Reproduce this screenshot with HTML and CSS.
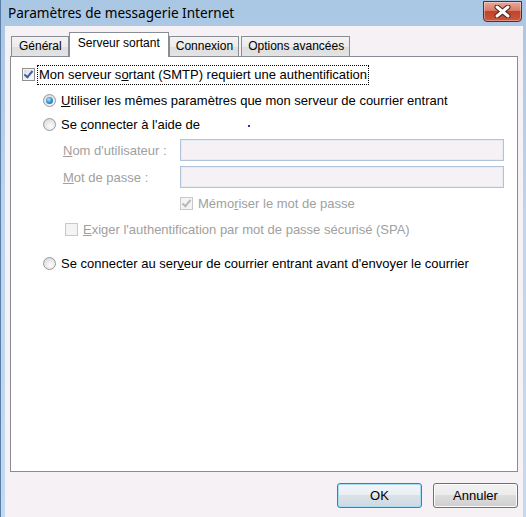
FILE: index.html
```html
<!DOCTYPE html>
<html lang="fr">
<head>
  <meta charset="UTF-8">
  <title>Paramètres de messagerie Internet</title>
  <link rel="stylesheet" href="styles.css">
</head>
<body>
  <div class="window">
    <div class="titlebar">
      <span class="title">Paramètres de messagerie Internet</span>
      <div class="close">
        <svg width="17" height="13" viewBox="0 0 17 13">
          <path d="M3 2 L14 11 M14 2 L3 11" stroke="#4a1f1a" stroke-width="5" stroke-linecap="round"/>
          <path d="M3 2 L14 11 M14 2 L3 11" stroke="#ffffff" stroke-width="3" stroke-linecap="round"/>
        </svg>
      </div>
    </div>

    <div class="client">
      <div class="tabs">
        <div class="tab">Général</div>
        <div class="tab active">Serveur sortant</div>
        <div class="tab">Connexion</div>
        <div class="tab">Options avancées</div>
      </div>

      <div class="panel">
        <div class="row row-auth">
          <span class="check checked"></span>
          <span class="focus">Mon serveur s<u>o</u>rtant (SMTP) requiert une authentification</span>
        </div>
        <div class="row row-same">
          <span class="radio selected"></span>
          <span><u>U</u>tiliser les mêmes paramètres que mon serveur de courrier entrant</span>
        </div>
        <div class="row row-login">
          <span class="radio"></span>
          <span>Se <u>c</u>onnecter à l'aide de</span>
          <span class="dot"></span>
        </div>
        <div class="field row-user">
          <label class="disabled"><u>N</u>om d'utilisateur :</label>
          <input type="text" disabled>
        </div>
        <div class="field row-pass">
          <label class="disabled"><u>M</u>ot de passe :</label>
          <input type="password" disabled>
        </div>
        <div class="row row-remember disabled">
          <span class="check checked off"></span>
          <span>Mémo<u>r</u>iser le mot de passe</span>
        </div>
        <div class="row row-spa disabled">
          <span class="check off"></span>
          <span><u>E</u>xiger l'authentification par mot de passe sécurisé (SPA)</span>
        </div>
        <div class="row row-before">
          <span class="radio"></span>
          <span>Se connecter au ser<u>v</u>eur de courrier entrant avant d'envoyer le courrier</span>
        </div>
      </div>

      <div class="buttons">
        <button class="btn default">OK</button>
        <button class="btn">Annuler</button>
      </div>
    </div>
  </div>
</body>
</html>
```

FILE: styles.css
```css
body {
  margin: 0;
  width: 526px;
  height: 517px;
  overflow: hidden;
  font-family: 'Liberation Sans', Arial, sans-serif;
  font-size: 13px;
  color: #000;
}
.window {
  height: 517px;
  display: flex;
  flex-direction: column;
  background: linear-gradient(180deg, #a9c6e3 0%, #bcd4ee 40%, #c3d9f0 100%);
  border-left: 1px solid #5b7ea6;
}

/* Title bar */
.titlebar {
  height: 26px;
  display: flex;
  justify-content: space-between;
  align-items: flex-start;
}
.title {
  font-family: 'Noto Sans', sans-serif;
  font-size: 13.6px;
  color: #000;
  margin: 4px 0 0 7px;
  line-height: 18px;
}
.close {
  width: 37px;
  height: 19px;
  margin: 1px 4px 0 0;
  border: 1px solid #5c2b2b;
  border-radius: 0 0 4px 4px;
  background: linear-gradient(180deg, #e9a99b 0%, #d97a65 45%, #c2432b 50%, #c9583f 100%);
  display: flex;
  align-items: center;
  justify-content: center;
  box-shadow: inset 0 0 0 1px rgba(255,255,255,0.35);
}

/* Client area */
.client {
  flex: 1;
  margin: 0 3px 0 4px;
  background: #f5f1f5;
  padding: 7px 5px 0 5px;
  display: flex;
  flex-direction: column;
}

/* Tabs */
.tabs {
  display: flex;
  align-items: flex-end;
  height: 23px;
  padding-left: 1px;
  position: relative;
  z-index: 1;
  font-size: 12px;
}
.tab {
  height: 19px;
  line-height: 19px;
  padding: 0 5px 0 6px;
  border: 1px solid #898c95;
  border-bottom: none;
  background: linear-gradient(180deg, #f3f3f3 0%, #ebebeb 50%, #dedede 51%, #e3e3e3 100%);
  margin-right: 2px;
}
.tab:first-child { margin-right: 0; padding: 0 6px 0 7px; }
.tab.active {
  height: 24px;
  line-height: 20px;
  margin-bottom: -1px;
  background: #fff;
  padding: 0 8px;
  margin-right: 0;
}

/* Panel */
.panel {
  height: 406px;
  border: 1px solid #898c95;
  background: #fff;
  padding: 8px 0 0 11px;
  display: flex;
  flex-direction: column;
}
.row {
  display: flex;
  align-items: center;
  gap: 5px;
}
.row-auth { height: 19px; }
.row-same, .row-login, .row-before { height: 18px; padding-left: 21px; }
.row-same { margin-top: 7px; }
.row-login { margin-top: 6px; }
.row-before { margin-top: 17px; }
.row-remember { height: 16px; margin-top: 7px; padding-left: 158px; }
.row-spa { height: 16px; margin-top: 10px; padding-left: 43px; }
.disabled { color: #a0a0a0; }

.focus {
  outline: 1px dotted #000;
  padding: 1px 1px 2px 1px;
  margin-left: -2px;
}
.dot {
  width: 2px;
  height: 2px;
  background: #2a2ad0;
  margin-left: 43px;
  margin-top: 4px;
}

.field {
  display: flex;
  align-items: center;
  height: 22px;
  padding-left: 41px;
}
.row-user { margin-top: 6px; }
.row-pass { margin-top: 5px; }
.field label { width: 117px; }
.field input {
  width: 324px;
  height: 22px;
  box-sizing: border-box;
  border: 1px solid #b0c3d9;
  background: #f5f1f5;
  outline: 1px solid #e6ecf4;
  outline-offset: -2px;
  margin: 0;
}

/* Checkbox */
.check {
  width: 11px;
  height: 11px;
  border: 1px solid #8e8f8f;
  background: linear-gradient(135deg, #d7d7d7 0%, #f4f4f4 70%, #fdfdfd 100%);
  box-shadow: inset 0 0 0 1px #f4f4f4;
  position: relative;
  flex: none;
}
.check.checked::after {
  content: "";
  position: absolute;
  left: 3px;
  top: 0px;
  width: 3px;
  height: 7px;
  border: solid #3d5fa6;
  border-width: 0 2px 2px 0;
  transform: rotate(40deg);
}
.check.off {
  border-color: #c8c8c8;
  background: #f4f4f4;
  box-shadow: none;
}
.check.off::after { border-color: #b8b8b8; }

/* Radio */
.radio {
  width: 11px;
  height: 11px;
  border-radius: 50%;
  border: 1px solid #9a9a9a;
  background: radial-gradient(circle at 60% 65%, #fdfdfd 0%, #e6e6e6 55%, #cfcfcf 100%);
  position: relative;
  flex: none;
}
.radio.selected::after {
  content: "";
  position: absolute;
  left: 2px;
  top: 2px;
  width: 7px;
  height: 7px;
  border-radius: 50%;
  background: radial-gradient(circle at 40% 35%, #b9e2fb 0%, #3f9be0 45%, #0b4e93 100%);
}

/* Buttons */
.buttons {
  display: flex;
  justify-content: flex-end;
  gap: 11px;
  margin-top: 11px;
}
.btn {
  width: 85px;
  height: 25px;
  font-family: inherit;
  font-size: 13px;
  color: #000;
  border: 1px solid #707070;
  border-radius: 3px;
  background: linear-gradient(180deg, #f2f2f2 0%, #ebebeb 49%, #dddddd 50%, #cfcfcf 100%);
  box-shadow: inset 0 0 0 1px #fcfcfc;
  padding: 0;
}
.btn.default {
  border-color: #3c7fb1;
  box-shadow: inset 0 0 0 1px #a6dcf5;
  background: linear-gradient(180deg, #f2f6f9 0%, #e9eef2 49%, #dae2e8 50%, #cfd9e0 100%);
}
```
